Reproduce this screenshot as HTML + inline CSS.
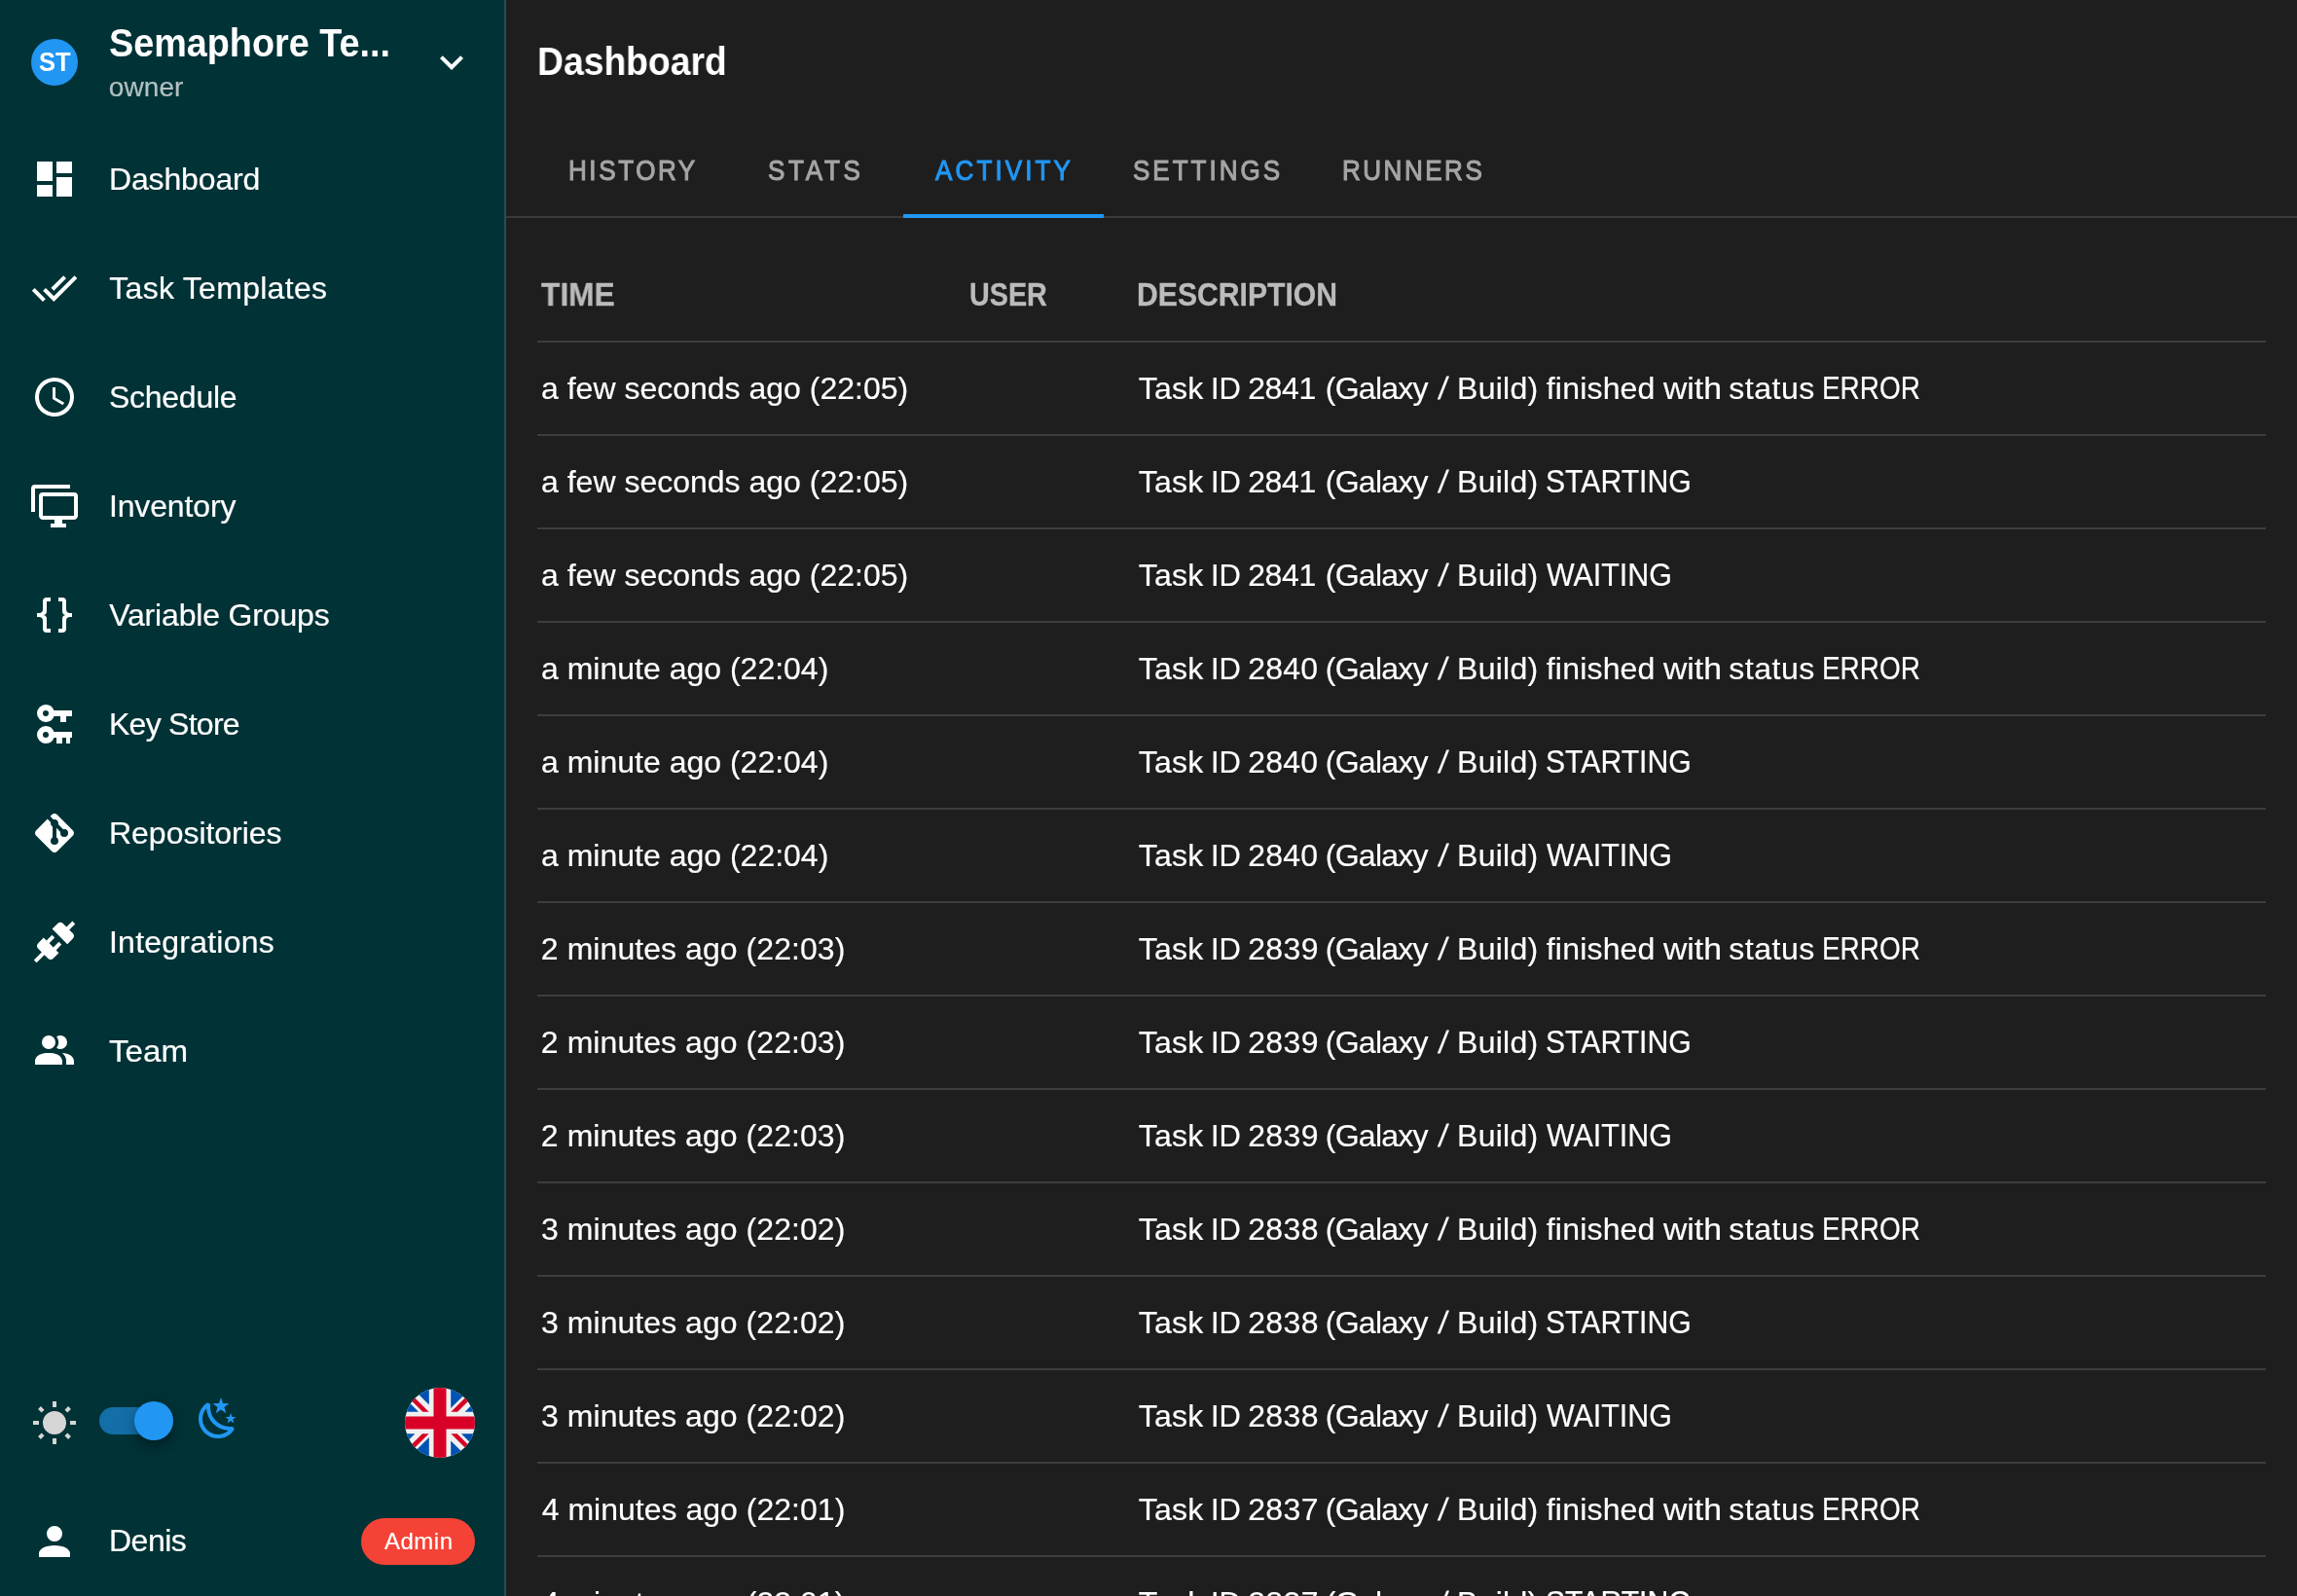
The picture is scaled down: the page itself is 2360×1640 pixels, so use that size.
<!DOCTYPE html>
<html lang="en"><head><meta charset="utf-8"><title>Semaphore UI - Dashboard</title>
<style>
*{box-sizing:border-box}
html,body{margin:0;padding:0}
body{width:2360px;height:1640px;overflow:hidden;background:#1e1e1e;position:relative;font-family:"Liberation Sans",sans-serif;color:#fff}
.t{position:absolute;white-space:nowrap;display:block;line-height:1;margin:0;padding:0}
.ic{position:absolute;display:block}
.abs{position:absolute}
h1{margin:0;font-size:inherit;font-weight:inherit}
.ln{position:absolute;left:552px;width:1776px;height:2px;background:#3d3d3d}
</style></head><body>
<div id="app" style="position:absolute;left:0;top:0;width:2360px;height:1640px;will-change:transform">

<aside>
<div class="abs" style="left:0;top:0;width:520px;height:1640px;background:#003236;border-right:2px solid #264f53"></div>
<header>
<div class="abs" style="left:32px;top:40px;width:48px;height:48px;border-radius:50%;background:#2196f3"></div>
<span class="t" style="left:39.77px;top:49.67px;font-size:27.8px;color:#ffffff;letter-spacing:0.000px;font-weight:700;transform:scaleX(0.9166);transform-origin:0 0">ST</span>
<span class="t" style="left:111.64px;top:24.04px;font-size:40px;color:#ffffff;letter-spacing:0.000px;font-weight:700;transform:scaleX(0.9442);transform-origin:0 0">Semaphore Te...</span>
<span class="t" style="left:111.78px;top:75.50px;font-size:28px;color:#b2c1c3;letter-spacing:0.083px;-webkit-text-stroke:0.2px #b2c1c3">owner</span>
<svg class="ic" style="left:440px;top:40px" width="48" height="48" viewBox="0 0 24 24"><path fill="#fff" d="M7.41,8.58L12,13.17L16.59,8.58L18,10L12,16L6,10L7.41,8.58Z"/></svg>
</header>
<nav>
<a><svg class="ic" style="left:32px;top:160px" width="48" height="48" viewBox="0 0 24 24"><path fill="#fff" d="M13,3V9H21V3M13,21H21V11H13M3,21H11V15H3M3,13H11V3H3V13Z"/></svg><span class="t" style="left:112.02px;top:167.81px;font-size:32px;color:#ffffff;letter-spacing:-0.153px;-webkit-text-stroke:0.2px #ffffff">Dashboard</span></a>
<a><svg class="ic" style="left:32px;top:272px" width="48" height="48" viewBox="0 0 24 24"><path fill="#fff" d="M0.41,13.41L6,19L7.41,17.58L1.83,12M22.24,5.58L11.66,16.17L7.5,12L6.07,13.41L11.66,19L23.66,7M18,7L16.59,5.58L10.24,11.93L11.66,13.34L18,7Z"/></svg><span class="t" style="left:112.28px;top:279.81px;font-size:32px;color:#ffffff;letter-spacing:0.289px;-webkit-text-stroke:0.2px #ffffff">Task Templates</span></a>
<a><svg class="ic" style="left:32px;top:384px" width="48" height="48" viewBox="0 0 24 24"><path fill="#fff" d="M12,20A8,8 0 0,0 20,12A8,8 0 0,0 12,4A8,8 0 0,0 4,12A8,8 0 0,0 12,20M12,2A10,10 0 0,1 22,12A10,10 0 0,1 12,22C6.47,22 2,17.5 2,12A10,10 0 0,1 12,2M12.5,7V12.25L17,14.92L16.25,16.15L11,13V7H12.5Z"/></svg><span class="t" style="left:111.91px;top:391.81px;font-size:32px;color:#ffffff;letter-spacing:-0.246px;-webkit-text-stroke:0.2px #ffffff">Schedule</span></a>
<a><svg class="ic" style="left:32px;top:496px" width="48" height="48" viewBox="0 0 24 24"><path fill="#fff" d="M22,17V7H6V17H22M22,5A2,2 0 0,1 24,7V17C24,18.11 23.1,19 22,19H16V21H18V23H10V21H12V19H6C4.89,19 4,18.11 4,17V7A2,2 0 0,1 6,5H22M2,3V15H0V3A2,2 0 0,1 2,1H20V3H2Z"/></svg><span class="t" style="left:111.97px;top:503.81px;font-size:32px;color:#ffffff;letter-spacing:-0.151px;-webkit-text-stroke:0.2px #ffffff">Inventory</span></a>
<a><svg class="ic" style="left:32px;top:608px" width="48" height="48" viewBox="0 0 24 24"><path fill="#fff" d="M8,3A2,2 0 0,0 6,5V9A2,2 0 0,1 4,11H3V13H4A2,2 0 0,1 6,15V19A2,2 0 0,0 8,21H10V19H8V14A2,2 0 0,0 6,12A2,2 0 0,0 8,10V5H10V3M16,3A2,2 0 0,1 18,5V9A2,2 0 0,0 20,11H21V13H20A2,2 0 0,0 18,15V19A2,2 0 0,1 16,21H14V19H16V14A2,2 0 0,1 18,12A2,2 0 0,1 16,10V5H14V3H16Z"/></svg><span class="t" style="left:112.15px;top:615.81px;font-size:32px;color:#ffffff;letter-spacing:-0.167px;-webkit-text-stroke:0.2px #ffffff">Variable Groups</span></a>
<a><svg class="ic" style="left:32px;top:720px" width="48" height="48" viewBox="0 0 24 24"><path fill="#fff" d="M7.5,2A4.5,4.5 0 0,1 11.74,5H21V8H18V11H15V8H11.74A4.5,4.5 0 0,1 7.5,11A4.5,4.5 0 0,1 3,6.5A4.5,4.5 0 0,1 7.5,2M7.5,5A1.5,1.5 0 0,0 6,6.5A1.5,1.5 0 0,0 7.5,8A1.5,1.5 0 0,0 9,6.5A1.5,1.5 0 0,0 7.5,5M7.5,13A4.5,4.5 0 0,1 11.74,16H21V19H20V22H18V19H16V22H13V19H11.74A4.5,4.5 0 0,1 7.5,22A4.5,4.5 0 0,1 3,17.5A4.5,4.5 0 0,1 7.5,13M7.5,16A1.5,1.5 0 0,0 6,17.5A1.5,1.5 0 0,0 7.5,19A1.5,1.5 0 0,0 9,17.5A1.5,1.5 0 0,0 7.5,16Z"/></svg><span class="t" style="left:112.02px;top:727.81px;font-size:32px;color:#ffffff;letter-spacing:-0.741px;-webkit-text-stroke:0.2px #ffffff">Key Store</span></a>
<a><svg class="ic" style="left:32px;top:832px" width="48" height="48" viewBox="0 0 24 24"><path fill="#fff" d="M2.6,10.59L8.38,4.8L10.07,6.5C9.83,7.35 10.22,8.28 11,8.73V14.27C10.4,14.61 10,15.26 10,16A2,2 0 0,0 12,18A2,2 0 0,0 14,16C14,15.26 13.6,14.61 13,14.27V9.41L15.07,11.5C15,11.65 15,11.82 15,12A2,2 0 0,0 17,14A2,2 0 0,0 19,12A2,2 0 0,0 17,10C16.82,10 16.65,10 16.5,10.07L13.93,7.5C14.19,6.57 13.71,5.55 12.78,5.16C12.35,5 11.9,4.96 11.5,5.07L9.8,3.38L10.59,2.6C11.37,1.81 12.63,1.81 13.41,2.6L21.4,10.59C22.19,11.37 22.19,12.63 21.4,13.41L13.41,21.4C12.63,22.19 11.37,22.19 10.59,21.4L2.6,13.41C1.81,12.63 1.81,11.37 2.6,10.59Z"/></svg><span class="t" style="left:112.02px;top:839.81px;font-size:32px;color:#ffffff;letter-spacing:-0.028px;-webkit-text-stroke:0.2px #ffffff">Repositories</span></a>
<a><svg class="ic" style="left:32px;top:944px" width="48" height="48" viewBox="0 0 24 24"><path fill="#fff" d="M21.4,7.5C22.2,8.3 22.2,9.6 21.4,10.3L18.6,13.1L10.8,5.3L13.6,2.5C14.4,1.7 15.7,1.7 16.4,2.5L18.2,4.3L21.2,1.3L22.6,2.7L19.6,5.7L21.4,7.5M15.6,13.3L14.2,11.9L11.4,14.7L9.3,12.6L12.1,9.8L10.7,8.4L7.9,11.2L6.4,9.8L3.6,12.6C2.8,13.4 2.8,14.7 3.6,15.4L5.4,17.2L1.4,21.2L2.8,22.6L6.8,18.6L8.6,20.4C9.4,21.2 10.7,21.2 11.4,20.4L14.2,17.6L12.8,16.2L15.6,13.3Z"/></svg><span class="t" style="left:111.97px;top:951.81px;font-size:32px;color:#ffffff;letter-spacing:0.235px;-webkit-text-stroke:0.2px #ffffff">Integrations</span></a>
<a><svg class="ic" style="left:32px;top:1056px" width="48" height="48" viewBox="0 0 24 24"><path fill="#fff" d="M16 17V19H2V17S2 13 9 13 16 17 16 17M12.5 7.5A3.5 3.5 0 1 0 9 11A3.5 3.5 0 0 0 12.5 7.5M15.94 13A5.32 5.32 0 0 1 18 17V19H22V17S22 13.37 15.94 13M15 4A3.39 3.39 0 0 0 13.07 4.59A5 5 0 0 1 13.07 10.41A3.39 3.39 0 0 0 15 11A3.5 3.5 0 0 0 15 4Z"/></svg><span class="t" style="left:112.26px;top:1063.81px;font-size:32px;color:#ffffff;letter-spacing:0.000px;-webkit-text-stroke:0.2px #ffffff;transform:scaleX(1.0366);transform-origin:0 0">Team</span></a>
</nav>
<footer>
<svg class="ic" style="left:32px;top:1438.9px" width="48" height="48" viewBox="0 0 24 24"><path fill="#d6d6d6" d="M3.55,18.54L4.96,19.95L6.76,18.16L5.34,16.74M11,22.45C11.32,22.45 13,22.45 13,22.45V19.5H11M12,5.5A6,6 0 0,0 6,11.5A6,6 0 0,0 12,17.5A6,6 0 0,0 18,11.5C18,8.18 15.31,5.5 12,5.5M20,12.5H23V10.5H20M17.24,18.16L19.04,19.95L20.45,18.54L18.66,16.74M20.45,4.46L19.04,3.05L17.24,4.84L18.66,6.26M13,0.55H11V3.5H13M4,10.5H1V12.5H4M6.76,4.84L4.96,3.05L3.55,4.46L5.34,6.26L6.76,4.84Z"/></svg>
<div class="abs" style="left:102px;top:1446px;width:72px;height:28px;border-radius:14px;background:#146ea7"></div>
<div class="abs" style="left:138px;top:1440px;width:40px;height:40px;border-radius:50%;background:#2196f3;box-shadow:0 4px 8px -2px rgba(0,0,0,.2),0 8px 10px 0 rgba(0,0,0,.14),0 2px 20px 0 rgba(0,0,0,.12)"></div>
<svg class="ic" style="left:200px;top:1434.2px" width="48" height="48" viewBox="0 0 24 24"><path fill="#2196f3" d="M17.75,4.09L15.22,6.03L16.13,9.09L13.5,7.28L10.87,9.09L11.78,6.03L9.25,4.09L12.44,4L13.5,1L14.56,4L17.75,4.09M21.25,11L19.61,12.25L20.2,14.23L18.5,13.06L16.8,14.23L17.39,12.25L15.75,11L17.81,10.95L18.5,9L19.19,10.95L21.25,11M18.97,15.95C19.8,15.87 20.69,17.05 20.16,17.8C19.84,18.25 19.5,18.67 19.08,19.07C15.17,23 8.84,23 4.94,19.07C1.03,15.17 1.03,8.83 4.94,4.93C5.34,4.53 5.76,4.17 6.21,3.85C6.96,3.32 8.14,4.21 8.06,5.04C7.79,7.9 8.75,10.87 10.95,13.06C13.14,15.26 16.1,16.22 18.97,15.95M17.33,17.97C14.5,17.81 11.7,16.64 9.53,14.5C7.36,12.31 6.2,9.5 6.04,6.68C3.23,9.82 3.34,14.64 6.35,17.66C9.37,20.67 14.19,20.78 17.33,17.97Z"/></svg>
<svg class="ic" style="left:416px;top:1426px" width="72" height="72" viewBox="-36 -36 72 72"><defs><clipPath id="fc"><circle cx="0" cy="0" r="36"/></clipPath></defs><g clip-path="url(#fc)"><rect x="-36" y="-36" width="72" height="72" fill="#f0f0f0"/><g><polygon fill="#0052b4" points="-11.2,-18.4 -11.2,-60 -52.8,-60"/><polygon fill="#0052b4" points="-21.9,-11.2 -60,-11.2 -60,-49.3"/><polygon fill="#d80027" points="-11.35,-11.2 -60,-59.85 -60,-53.5 -17.7,-11.2"/><polygon fill="#0052b4" points="11.2,-14.899999999999999 11.2,-60 56.3,-60"/><polygon fill="#0052b4" points="25.6,-11.2 60,-11.2 60,-45.6"/><polygon fill="#d80027" points="11.35,-11.2 60,-59.85 60,-53.1 18.1,-11.2"/></g><g transform="rotate(180)"><polygon fill="#0052b4" points="-11.2,-18.4 -11.2,-60 -52.8,-60"/><polygon fill="#0052b4" points="-21.9,-11.2 -60,-11.2 -60,-49.3"/><polygon fill="#d80027" points="-11.35,-11.2 -60,-59.85 -60,-53.5 -17.7,-11.2"/><polygon fill="#0052b4" points="11.2,-14.899999999999999 11.2,-60 56.3,-60"/><polygon fill="#0052b4" points="25.6,-11.2 60,-11.2 60,-45.6"/><polygon fill="#d80027" points="11.35,-11.2 60,-59.85 60,-53.1 18.1,-11.2"/></g><rect x="-36" y="-6.5" width="72" height="13.0" fill="#d80027"/><rect x="-6.5" y="-36" width="13.0" height="72" fill="#d80027"/></g></svg>
<svg class="ic" style="left:32px;top:1560px" width="48" height="48" viewBox="0 0 24 24"><path fill="#fff" d="M12,4A4,4 0 0,1 16,8A4,4 0 0,1 12,12A4,4 0 0,1 8,8A4,4 0 0,1 12,4M12,14C16.42,14 20,15.79 20,18V20H4V18C4,15.79 7.58,14 12,14Z"/></svg>
<span class="t" style="left:112.02px;top:1566.81px;font-size:32px;color:#ffffff;letter-spacing:-0.502px;-webkit-text-stroke:0.2px #ffffff">Denis</span>
<div class="abs" style="left:371px;top:1560px;width:117px;height:48px;border-radius:24px;background:#f44336"></div>
<span class="t" style="left:394.95px;top:1571.68px;font-size:24px;color:#ffffff;letter-spacing:0.521px;-webkit-text-stroke:0.2px #ffffff">Admin</span>
</footer>
</aside>
<main>
<h1><span class="t" style="left:551.85px;top:43.14px;font-size:40px;color:#ffffff;letter-spacing:0.000px;font-weight:700;transform:scaleX(0.9318);transform-origin:0 0">Dashboard</span></h1>
<div role="tablist">
<div class="abs" style="left:520px;top:222px;width:1840px;height:2px;background:#3a3a3a"></div>
<div class="abs" style="left:928px;top:220px;width:206px;height:4px;background:#2196f3"></div>
<span class="t" style="left:583.75px;top:161.44px;font-size:28.9px;color:#a5a5a5;letter-spacing:2.883px;-webkit-text-stroke:1.1px #a5a5a5;transform:scaleX(0.9000);transform-origin:0 0">HISTORY</span>
<span class="t" style="left:789.36px;top:161.44px;font-size:28.9px;color:#a5a5a5;letter-spacing:4.158px;-webkit-text-stroke:1.1px #a5a5a5;transform:scaleX(0.9000);transform-origin:0 0">STATS</span>
<span class="t" style="left:960.53px;top:161.44px;font-size:28.9px;color:#2196f3;letter-spacing:3.478px;-webkit-text-stroke:1.1px #2196f3;transform:scaleX(0.9000);transform-origin:0 0">ACTIVITY</span>
<span class="t" style="left:1163.76px;top:161.44px;font-size:28.9px;color:#a5a5a5;letter-spacing:3.340px;-webkit-text-stroke:1.1px #a5a5a5;transform:scaleX(0.9000);transform-origin:0 0">SETTINGS</span>
<span class="t" style="left:1378.75px;top:161.44px;font-size:28.9px;color:#a5a5a5;letter-spacing:2.811px;-webkit-text-stroke:1.1px #a5a5a5;transform:scaleX(0.9000);transform-origin:0 0">RUNNERS</span>
</div>
<div role="table">
<div role="row"><span class="t" style="left:556.28px;top:286.17px;font-size:33px;color:#bbbbbb;letter-spacing:0.000px;font-weight:700;-webkit-text-stroke:0.3px #bbbbbb;transform:scaleX(0.9610);transform-origin:0 0">TIME</span><span class="t" style="left:996.06px;top:286.17px;font-size:33px;color:#bbbbbb;letter-spacing:0.000px;font-weight:700;-webkit-text-stroke:0.3px #bbbbbb;transform:scaleX(0.8712);transform-origin:0 0">USER</span><span class="t" style="left:1168.27px;top:286.17px;font-size:33px;color:#bbbbbb;letter-spacing:0.000px;font-weight:700;-webkit-text-stroke:0.3px #bbbbbb;transform:scaleX(0.9135);transform-origin:0 0">DESCRIPTION</span><div class="ln" style="top:350px"></div></div>
<div role="row"><span class="t" style="left:556.02px;top:382.61px;font-size:32px;color:#ffffff;letter-spacing:0.001px;-webkit-text-stroke:0.2px #ffffff">a few seconds ago (22:05)</span> <span class="t" style="left:1169.73px;top:382.61px;font-size:32px;color:#ffffff;letter-spacing:0.231px;-webkit-text-stroke:0.2px #ffffff">Task</span> <span class="t" style="left:1243.86px;top:382.61px;font-size:32px;color:#ffffff;letter-spacing:0.000px;-webkit-text-stroke:0.2px #ffffff;transform:scaleX(0.9663);transform-origin:0 0">ID</span> <span class="t" style="left:1282.13px;top:382.61px;font-size:32px;color:#ffffff;letter-spacing:-0.316px;-webkit-text-stroke:0.2px #ffffff">2841</span> <span class="t" style="left:1361.71px;top:382.61px;font-size:32px;color:#ffffff;letter-spacing:-0.723px;-webkit-text-stroke:0.2px #ffffff">(Galaxy</span> <span class="t" style="left:1478.49px;top:382.61px;font-size:32px;color:#ffffff;letter-spacing:0.000px;-webkit-text-stroke:0.2px #ffffff;transform:skewX(-7deg);transform-origin:50% 60%">/</span> <span class="t" style="left:1497.02px;top:382.61px;font-size:32px;color:#ffffff;letter-spacing:0.281px;-webkit-text-stroke:0.2px #ffffff">Build)</span> <span class="t" style="left:1588.76px;top:382.61px;font-size:32px;color:#ffffff;letter-spacing:0.194px;-webkit-text-stroke:0.2px #ffffff">finished</span> <span class="t" style="left:1708.74px;top:382.61px;font-size:32px;color:#ffffff;letter-spacing:0.000px;-webkit-text-stroke:0.2px #ffffff;transform:scaleX(1.0540);transform-origin:0 0">with</span> <span class="t" style="left:1776.32px;top:382.61px;font-size:32px;color:#ffffff;letter-spacing:0.523px;-webkit-text-stroke:0.2px #ffffff">status</span> <span class="t" style="left:1872.45px;top:381.77px;font-size:33px;color:#ffffff;letter-spacing:0.000px;-webkit-text-stroke:0.2px #ffffff;transform:scaleX(0.8461);transform-origin:0 0">ERROR</span> <div class="ln" style="top:446px"></div></div>
<div role="row"><span class="t" style="left:556.02px;top:478.61px;font-size:32px;color:#ffffff;letter-spacing:0.001px;-webkit-text-stroke:0.2px #ffffff">a few seconds ago (22:05)</span> <span class="t" style="left:1169.73px;top:478.61px;font-size:32px;color:#ffffff;letter-spacing:0.231px;-webkit-text-stroke:0.2px #ffffff">Task</span> <span class="t" style="left:1243.86px;top:478.61px;font-size:32px;color:#ffffff;letter-spacing:0.000px;-webkit-text-stroke:0.2px #ffffff;transform:scaleX(0.9663);transform-origin:0 0">ID</span> <span class="t" style="left:1282.13px;top:478.61px;font-size:32px;color:#ffffff;letter-spacing:-0.316px;-webkit-text-stroke:0.2px #ffffff">2841</span> <span class="t" style="left:1361.71px;top:478.61px;font-size:32px;color:#ffffff;letter-spacing:-0.723px;-webkit-text-stroke:0.2px #ffffff">(Galaxy</span> <span class="t" style="left:1478.49px;top:478.61px;font-size:32px;color:#ffffff;letter-spacing:0.000px;-webkit-text-stroke:0.2px #ffffff;transform:skewX(-7deg);transform-origin:50% 60%">/</span> <span class="t" style="left:1497.02px;top:478.61px;font-size:32px;color:#ffffff;letter-spacing:0.281px;-webkit-text-stroke:0.2px #ffffff">Build)</span> <span class="t" style="left:1587.78px;top:477.77px;font-size:33px;color:#ffffff;letter-spacing:0.000px;-webkit-text-stroke:0.2px #ffffff;transform:scaleX(0.9141);transform-origin:0 0">STARTING</span> <div class="ln" style="top:542px"></div></div>
<div role="row"><span class="t" style="left:556.02px;top:574.61px;font-size:32px;color:#ffffff;letter-spacing:0.001px;-webkit-text-stroke:0.2px #ffffff">a few seconds ago (22:05)</span> <span class="t" style="left:1169.73px;top:574.61px;font-size:32px;color:#ffffff;letter-spacing:0.231px;-webkit-text-stroke:0.2px #ffffff">Task</span> <span class="t" style="left:1243.86px;top:574.61px;font-size:32px;color:#ffffff;letter-spacing:0.000px;-webkit-text-stroke:0.2px #ffffff;transform:scaleX(0.9663);transform-origin:0 0">ID</span> <span class="t" style="left:1282.13px;top:574.61px;font-size:32px;color:#ffffff;letter-spacing:-0.316px;-webkit-text-stroke:0.2px #ffffff">2841</span> <span class="t" style="left:1361.71px;top:574.61px;font-size:32px;color:#ffffff;letter-spacing:-0.723px;-webkit-text-stroke:0.2px #ffffff">(Galaxy</span> <span class="t" style="left:1478.49px;top:574.61px;font-size:32px;color:#ffffff;letter-spacing:0.000px;-webkit-text-stroke:0.2px #ffffff;transform:skewX(-7deg);transform-origin:50% 60%">/</span> <span class="t" style="left:1497.02px;top:574.61px;font-size:32px;color:#ffffff;letter-spacing:0.281px;-webkit-text-stroke:0.2px #ffffff">Build)</span> <span class="t" style="left:1589.03px;top:573.77px;font-size:33px;color:#ffffff;letter-spacing:0.000px;-webkit-text-stroke:0.2px #ffffff;transform:scaleX(0.9212);transform-origin:0 0">WAITING</span> <div class="ln" style="top:638px"></div></div>
<div role="row"><span class="t" style="left:556.02px;top:670.61px;font-size:32px;color:#ffffff;letter-spacing:0.000px;-webkit-text-stroke:0.2px #ffffff">a minute ago (22:04)</span> <span class="t" style="left:1169.73px;top:670.61px;font-size:32px;color:#ffffff;letter-spacing:0.231px;-webkit-text-stroke:0.2px #ffffff">Task</span> <span class="t" style="left:1243.86px;top:670.61px;font-size:32px;color:#ffffff;letter-spacing:0.000px;-webkit-text-stroke:0.2px #ffffff;transform:scaleX(0.9663);transform-origin:0 0">ID</span> <span class="t" style="left:1282.13px;top:670.61px;font-size:32px;color:#ffffff;letter-spacing:0.276px;-webkit-text-stroke:0.2px #ffffff">2840</span> <span class="t" style="left:1361.71px;top:670.61px;font-size:32px;color:#ffffff;letter-spacing:-0.723px;-webkit-text-stroke:0.2px #ffffff">(Galaxy</span> <span class="t" style="left:1478.49px;top:670.61px;font-size:32px;color:#ffffff;letter-spacing:0.000px;-webkit-text-stroke:0.2px #ffffff;transform:skewX(-7deg);transform-origin:50% 60%">/</span> <span class="t" style="left:1497.02px;top:670.61px;font-size:32px;color:#ffffff;letter-spacing:0.281px;-webkit-text-stroke:0.2px #ffffff">Build)</span> <span class="t" style="left:1588.76px;top:670.61px;font-size:32px;color:#ffffff;letter-spacing:0.194px;-webkit-text-stroke:0.2px #ffffff">finished</span> <span class="t" style="left:1708.74px;top:670.61px;font-size:32px;color:#ffffff;letter-spacing:0.000px;-webkit-text-stroke:0.2px #ffffff;transform:scaleX(1.0540);transform-origin:0 0">with</span> <span class="t" style="left:1776.32px;top:670.61px;font-size:32px;color:#ffffff;letter-spacing:0.523px;-webkit-text-stroke:0.2px #ffffff">status</span> <span class="t" style="left:1872.45px;top:669.77px;font-size:33px;color:#ffffff;letter-spacing:0.000px;-webkit-text-stroke:0.2px #ffffff;transform:scaleX(0.8461);transform-origin:0 0">ERROR</span> <div class="ln" style="top:734px"></div></div>
<div role="row"><span class="t" style="left:556.02px;top:766.61px;font-size:32px;color:#ffffff;letter-spacing:0.000px;-webkit-text-stroke:0.2px #ffffff">a minute ago (22:04)</span> <span class="t" style="left:1169.73px;top:766.61px;font-size:32px;color:#ffffff;letter-spacing:0.231px;-webkit-text-stroke:0.2px #ffffff">Task</span> <span class="t" style="left:1243.86px;top:766.61px;font-size:32px;color:#ffffff;letter-spacing:0.000px;-webkit-text-stroke:0.2px #ffffff;transform:scaleX(0.9663);transform-origin:0 0">ID</span> <span class="t" style="left:1282.13px;top:766.61px;font-size:32px;color:#ffffff;letter-spacing:0.276px;-webkit-text-stroke:0.2px #ffffff">2840</span> <span class="t" style="left:1361.71px;top:766.61px;font-size:32px;color:#ffffff;letter-spacing:-0.723px;-webkit-text-stroke:0.2px #ffffff">(Galaxy</span> <span class="t" style="left:1478.49px;top:766.61px;font-size:32px;color:#ffffff;letter-spacing:0.000px;-webkit-text-stroke:0.2px #ffffff;transform:skewX(-7deg);transform-origin:50% 60%">/</span> <span class="t" style="left:1497.02px;top:766.61px;font-size:32px;color:#ffffff;letter-spacing:0.281px;-webkit-text-stroke:0.2px #ffffff">Build)</span> <span class="t" style="left:1587.78px;top:765.77px;font-size:33px;color:#ffffff;letter-spacing:0.000px;-webkit-text-stroke:0.2px #ffffff;transform:scaleX(0.9141);transform-origin:0 0">STARTING</span> <div class="ln" style="top:830px"></div></div>
<div role="row"><span class="t" style="left:556.02px;top:862.61px;font-size:32px;color:#ffffff;letter-spacing:0.000px;-webkit-text-stroke:0.2px #ffffff">a minute ago (22:04)</span> <span class="t" style="left:1169.73px;top:862.61px;font-size:32px;color:#ffffff;letter-spacing:0.231px;-webkit-text-stroke:0.2px #ffffff">Task</span> <span class="t" style="left:1243.86px;top:862.61px;font-size:32px;color:#ffffff;letter-spacing:0.000px;-webkit-text-stroke:0.2px #ffffff;transform:scaleX(0.9663);transform-origin:0 0">ID</span> <span class="t" style="left:1282.13px;top:862.61px;font-size:32px;color:#ffffff;letter-spacing:0.276px;-webkit-text-stroke:0.2px #ffffff">2840</span> <span class="t" style="left:1361.71px;top:862.61px;font-size:32px;color:#ffffff;letter-spacing:-0.723px;-webkit-text-stroke:0.2px #ffffff">(Galaxy</span> <span class="t" style="left:1478.49px;top:862.61px;font-size:32px;color:#ffffff;letter-spacing:0.000px;-webkit-text-stroke:0.2px #ffffff;transform:skewX(-7deg);transform-origin:50% 60%">/</span> <span class="t" style="left:1497.02px;top:862.61px;font-size:32px;color:#ffffff;letter-spacing:0.281px;-webkit-text-stroke:0.2px #ffffff">Build)</span> <span class="t" style="left:1589.03px;top:861.77px;font-size:33px;color:#ffffff;letter-spacing:0.000px;-webkit-text-stroke:0.2px #ffffff;transform:scaleX(0.9212);transform-origin:0 0">WAITING</span> <div class="ln" style="top:926px"></div></div>
<div role="row"><span class="t" style="left:555.83px;top:958.61px;font-size:32px;color:#ffffff;letter-spacing:0.060px;-webkit-text-stroke:0.2px #ffffff">2 minutes ago (22:03)</span> <span class="t" style="left:1169.73px;top:958.61px;font-size:32px;color:#ffffff;letter-spacing:0.231px;-webkit-text-stroke:0.2px #ffffff">Task</span> <span class="t" style="left:1243.86px;top:958.61px;font-size:32px;color:#ffffff;letter-spacing:0.000px;-webkit-text-stroke:0.2px #ffffff;transform:scaleX(0.9663);transform-origin:0 0">ID</span> <span class="t" style="left:1282.13px;top:958.61px;font-size:32px;color:#ffffff;letter-spacing:0.412px;-webkit-text-stroke:0.2px #ffffff">2839</span> <span class="t" style="left:1361.71px;top:958.61px;font-size:32px;color:#ffffff;letter-spacing:-0.723px;-webkit-text-stroke:0.2px #ffffff">(Galaxy</span> <span class="t" style="left:1478.49px;top:958.61px;font-size:32px;color:#ffffff;letter-spacing:0.000px;-webkit-text-stroke:0.2px #ffffff;transform:skewX(-7deg);transform-origin:50% 60%">/</span> <span class="t" style="left:1497.02px;top:958.61px;font-size:32px;color:#ffffff;letter-spacing:0.281px;-webkit-text-stroke:0.2px #ffffff">Build)</span> <span class="t" style="left:1588.76px;top:958.61px;font-size:32px;color:#ffffff;letter-spacing:0.194px;-webkit-text-stroke:0.2px #ffffff">finished</span> <span class="t" style="left:1708.74px;top:958.61px;font-size:32px;color:#ffffff;letter-spacing:0.000px;-webkit-text-stroke:0.2px #ffffff;transform:scaleX(1.0540);transform-origin:0 0">with</span> <span class="t" style="left:1776.32px;top:958.61px;font-size:32px;color:#ffffff;letter-spacing:0.523px;-webkit-text-stroke:0.2px #ffffff">status</span> <span class="t" style="left:1872.45px;top:957.77px;font-size:33px;color:#ffffff;letter-spacing:0.000px;-webkit-text-stroke:0.2px #ffffff;transform:scaleX(0.8461);transform-origin:0 0">ERROR</span> <div class="ln" style="top:1022px"></div></div>
<div role="row"><span class="t" style="left:555.83px;top:1054.61px;font-size:32px;color:#ffffff;letter-spacing:0.060px;-webkit-text-stroke:0.2px #ffffff">2 minutes ago (22:03)</span> <span class="t" style="left:1169.73px;top:1054.61px;font-size:32px;color:#ffffff;letter-spacing:0.231px;-webkit-text-stroke:0.2px #ffffff">Task</span> <span class="t" style="left:1243.86px;top:1054.61px;font-size:32px;color:#ffffff;letter-spacing:0.000px;-webkit-text-stroke:0.2px #ffffff;transform:scaleX(0.9663);transform-origin:0 0">ID</span> <span class="t" style="left:1282.13px;top:1054.61px;font-size:32px;color:#ffffff;letter-spacing:0.412px;-webkit-text-stroke:0.2px #ffffff">2839</span> <span class="t" style="left:1361.71px;top:1054.61px;font-size:32px;color:#ffffff;letter-spacing:-0.723px;-webkit-text-stroke:0.2px #ffffff">(Galaxy</span> <span class="t" style="left:1478.49px;top:1054.61px;font-size:32px;color:#ffffff;letter-spacing:0.000px;-webkit-text-stroke:0.2px #ffffff;transform:skewX(-7deg);transform-origin:50% 60%">/</span> <span class="t" style="left:1497.02px;top:1054.61px;font-size:32px;color:#ffffff;letter-spacing:0.281px;-webkit-text-stroke:0.2px #ffffff">Build)</span> <span class="t" style="left:1587.78px;top:1053.77px;font-size:33px;color:#ffffff;letter-spacing:0.000px;-webkit-text-stroke:0.2px #ffffff;transform:scaleX(0.9141);transform-origin:0 0">STARTING</span> <div class="ln" style="top:1118px"></div></div>
<div role="row"><span class="t" style="left:555.83px;top:1150.61px;font-size:32px;color:#ffffff;letter-spacing:0.060px;-webkit-text-stroke:0.2px #ffffff">2 minutes ago (22:03)</span> <span class="t" style="left:1169.73px;top:1150.61px;font-size:32px;color:#ffffff;letter-spacing:0.231px;-webkit-text-stroke:0.2px #ffffff">Task</span> <span class="t" style="left:1243.86px;top:1150.61px;font-size:32px;color:#ffffff;letter-spacing:0.000px;-webkit-text-stroke:0.2px #ffffff;transform:scaleX(0.9663);transform-origin:0 0">ID</span> <span class="t" style="left:1282.13px;top:1150.61px;font-size:32px;color:#ffffff;letter-spacing:0.412px;-webkit-text-stroke:0.2px #ffffff">2839</span> <span class="t" style="left:1361.71px;top:1150.61px;font-size:32px;color:#ffffff;letter-spacing:-0.723px;-webkit-text-stroke:0.2px #ffffff">(Galaxy</span> <span class="t" style="left:1478.49px;top:1150.61px;font-size:32px;color:#ffffff;letter-spacing:0.000px;-webkit-text-stroke:0.2px #ffffff;transform:skewX(-7deg);transform-origin:50% 60%">/</span> <span class="t" style="left:1497.02px;top:1150.61px;font-size:32px;color:#ffffff;letter-spacing:0.281px;-webkit-text-stroke:0.2px #ffffff">Build)</span> <span class="t" style="left:1589.03px;top:1149.77px;font-size:33px;color:#ffffff;letter-spacing:0.000px;-webkit-text-stroke:0.2px #ffffff;transform:scaleX(0.9212);transform-origin:0 0">WAITING</span> <div class="ln" style="top:1214px"></div></div>
<div role="row"><span class="t" style="left:555.97px;top:1246.61px;font-size:32px;color:#ffffff;letter-spacing:0.053px;-webkit-text-stroke:0.2px #ffffff">3 minutes ago (22:02)</span> <span class="t" style="left:1169.73px;top:1246.61px;font-size:32px;color:#ffffff;letter-spacing:0.231px;-webkit-text-stroke:0.2px #ffffff">Task</span> <span class="t" style="left:1243.86px;top:1246.61px;font-size:32px;color:#ffffff;letter-spacing:0.000px;-webkit-text-stroke:0.2px #ffffff;transform:scaleX(0.9663);transform-origin:0 0">ID</span> <span class="t" style="left:1282.13px;top:1246.61px;font-size:32px;color:#ffffff;letter-spacing:0.389px;-webkit-text-stroke:0.2px #ffffff">2838</span> <span class="t" style="left:1361.71px;top:1246.61px;font-size:32px;color:#ffffff;letter-spacing:-0.723px;-webkit-text-stroke:0.2px #ffffff">(Galaxy</span> <span class="t" style="left:1478.49px;top:1246.61px;font-size:32px;color:#ffffff;letter-spacing:0.000px;-webkit-text-stroke:0.2px #ffffff;transform:skewX(-7deg);transform-origin:50% 60%">/</span> <span class="t" style="left:1497.02px;top:1246.61px;font-size:32px;color:#ffffff;letter-spacing:0.281px;-webkit-text-stroke:0.2px #ffffff">Build)</span> <span class="t" style="left:1588.76px;top:1246.61px;font-size:32px;color:#ffffff;letter-spacing:0.194px;-webkit-text-stroke:0.2px #ffffff">finished</span> <span class="t" style="left:1708.74px;top:1246.61px;font-size:32px;color:#ffffff;letter-spacing:0.000px;-webkit-text-stroke:0.2px #ffffff;transform:scaleX(1.0540);transform-origin:0 0">with</span> <span class="t" style="left:1776.32px;top:1246.61px;font-size:32px;color:#ffffff;letter-spacing:0.523px;-webkit-text-stroke:0.2px #ffffff">status</span> <span class="t" style="left:1872.45px;top:1245.77px;font-size:33px;color:#ffffff;letter-spacing:0.000px;-webkit-text-stroke:0.2px #ffffff;transform:scaleX(0.8461);transform-origin:0 0">ERROR</span> <div class="ln" style="top:1310px"></div></div>
<div role="row"><span class="t" style="left:555.97px;top:1342.61px;font-size:32px;color:#ffffff;letter-spacing:0.053px;-webkit-text-stroke:0.2px #ffffff">3 minutes ago (22:02)</span> <span class="t" style="left:1169.73px;top:1342.61px;font-size:32px;color:#ffffff;letter-spacing:0.231px;-webkit-text-stroke:0.2px #ffffff">Task</span> <span class="t" style="left:1243.86px;top:1342.61px;font-size:32px;color:#ffffff;letter-spacing:0.000px;-webkit-text-stroke:0.2px #ffffff;transform:scaleX(0.9663);transform-origin:0 0">ID</span> <span class="t" style="left:1282.13px;top:1342.61px;font-size:32px;color:#ffffff;letter-spacing:0.389px;-webkit-text-stroke:0.2px #ffffff">2838</span> <span class="t" style="left:1361.71px;top:1342.61px;font-size:32px;color:#ffffff;letter-spacing:-0.723px;-webkit-text-stroke:0.2px #ffffff">(Galaxy</span> <span class="t" style="left:1478.49px;top:1342.61px;font-size:32px;color:#ffffff;letter-spacing:0.000px;-webkit-text-stroke:0.2px #ffffff;transform:skewX(-7deg);transform-origin:50% 60%">/</span> <span class="t" style="left:1497.02px;top:1342.61px;font-size:32px;color:#ffffff;letter-spacing:0.281px;-webkit-text-stroke:0.2px #ffffff">Build)</span> <span class="t" style="left:1587.78px;top:1341.77px;font-size:33px;color:#ffffff;letter-spacing:0.000px;-webkit-text-stroke:0.2px #ffffff;transform:scaleX(0.9141);transform-origin:0 0">STARTING</span> <div class="ln" style="top:1406px"></div></div>
<div role="row"><span class="t" style="left:555.97px;top:1438.61px;font-size:32px;color:#ffffff;letter-spacing:0.053px;-webkit-text-stroke:0.2px #ffffff">3 minutes ago (22:02)</span> <span class="t" style="left:1169.73px;top:1438.61px;font-size:32px;color:#ffffff;letter-spacing:0.231px;-webkit-text-stroke:0.2px #ffffff">Task</span> <span class="t" style="left:1243.86px;top:1438.61px;font-size:32px;color:#ffffff;letter-spacing:0.000px;-webkit-text-stroke:0.2px #ffffff;transform:scaleX(0.9663);transform-origin:0 0">ID</span> <span class="t" style="left:1282.13px;top:1438.61px;font-size:32px;color:#ffffff;letter-spacing:0.389px;-webkit-text-stroke:0.2px #ffffff">2838</span> <span class="t" style="left:1361.71px;top:1438.61px;font-size:32px;color:#ffffff;letter-spacing:-0.723px;-webkit-text-stroke:0.2px #ffffff">(Galaxy</span> <span class="t" style="left:1478.49px;top:1438.61px;font-size:32px;color:#ffffff;letter-spacing:0.000px;-webkit-text-stroke:0.2px #ffffff;transform:skewX(-7deg);transform-origin:50% 60%">/</span> <span class="t" style="left:1497.02px;top:1438.61px;font-size:32px;color:#ffffff;letter-spacing:0.281px;-webkit-text-stroke:0.2px #ffffff">Build)</span> <span class="t" style="left:1589.03px;top:1437.77px;font-size:33px;color:#ffffff;letter-spacing:0.000px;-webkit-text-stroke:0.2px #ffffff;transform:scaleX(0.9212);transform-origin:0 0">WAITING</span> <div class="ln" style="top:1502px"></div></div>
<div role="row"><span class="t" style="left:556.71px;top:1534.61px;font-size:32px;color:#ffffff;letter-spacing:0.015px;-webkit-text-stroke:0.2px #ffffff">4 minutes ago (22:01)</span> <span class="t" style="left:1169.73px;top:1534.61px;font-size:32px;color:#ffffff;letter-spacing:0.231px;-webkit-text-stroke:0.2px #ffffff">Task</span> <span class="t" style="left:1243.86px;top:1534.61px;font-size:32px;color:#ffffff;letter-spacing:0.000px;-webkit-text-stroke:0.2px #ffffff;transform:scaleX(0.9663);transform-origin:0 0">ID</span> <span class="t" style="left:1282.13px;top:1534.61px;font-size:32px;color:#ffffff;letter-spacing:0.431px;-webkit-text-stroke:0.2px #ffffff">2837</span> <span class="t" style="left:1361.71px;top:1534.61px;font-size:32px;color:#ffffff;letter-spacing:-0.723px;-webkit-text-stroke:0.2px #ffffff">(Galaxy</span> <span class="t" style="left:1478.49px;top:1534.61px;font-size:32px;color:#ffffff;letter-spacing:0.000px;-webkit-text-stroke:0.2px #ffffff;transform:skewX(-7deg);transform-origin:50% 60%">/</span> <span class="t" style="left:1497.02px;top:1534.61px;font-size:32px;color:#ffffff;letter-spacing:0.281px;-webkit-text-stroke:0.2px #ffffff">Build)</span> <span class="t" style="left:1588.76px;top:1534.61px;font-size:32px;color:#ffffff;letter-spacing:0.194px;-webkit-text-stroke:0.2px #ffffff">finished</span> <span class="t" style="left:1708.74px;top:1534.61px;font-size:32px;color:#ffffff;letter-spacing:0.000px;-webkit-text-stroke:0.2px #ffffff;transform:scaleX(1.0540);transform-origin:0 0">with</span> <span class="t" style="left:1776.32px;top:1534.61px;font-size:32px;color:#ffffff;letter-spacing:0.523px;-webkit-text-stroke:0.2px #ffffff">status</span> <span class="t" style="left:1872.45px;top:1533.77px;font-size:33px;color:#ffffff;letter-spacing:0.000px;-webkit-text-stroke:0.2px #ffffff;transform:scaleX(0.8461);transform-origin:0 0">ERROR</span> <div class="ln" style="top:1598px"></div></div>
<div role="row"><span class="t" style="left:556.71px;top:1630.61px;font-size:32px;color:#ffffff;letter-spacing:0.015px;-webkit-text-stroke:0.2px #ffffff">4 minutes ago (22:01)</span> <span class="t" style="left:1169.73px;top:1630.61px;font-size:32px;color:#ffffff;letter-spacing:0.231px;-webkit-text-stroke:0.2px #ffffff">Task</span> <span class="t" style="left:1243.86px;top:1630.61px;font-size:32px;color:#ffffff;letter-spacing:0.000px;-webkit-text-stroke:0.2px #ffffff;transform:scaleX(0.9663);transform-origin:0 0">ID</span> <span class="t" style="left:1282.13px;top:1630.61px;font-size:32px;color:#ffffff;letter-spacing:0.431px;-webkit-text-stroke:0.2px #ffffff">2837</span> <span class="t" style="left:1361.71px;top:1630.61px;font-size:32px;color:#ffffff;letter-spacing:-0.723px;-webkit-text-stroke:0.2px #ffffff">(Galaxy</span> <span class="t" style="left:1478.49px;top:1630.61px;font-size:32px;color:#ffffff;letter-spacing:0.000px;-webkit-text-stroke:0.2px #ffffff;transform:skewX(-7deg);transform-origin:50% 60%">/</span> <span class="t" style="left:1497.02px;top:1630.61px;font-size:32px;color:#ffffff;letter-spacing:0.281px;-webkit-text-stroke:0.2px #ffffff">Build)</span> <span class="t" style="left:1587.78px;top:1629.77px;font-size:33px;color:#ffffff;letter-spacing:0.000px;-webkit-text-stroke:0.2px #ffffff;transform:scaleX(0.9141);transform-origin:0 0">STARTING</span> </div>
</div>
</main>
</div>
</body></html>
